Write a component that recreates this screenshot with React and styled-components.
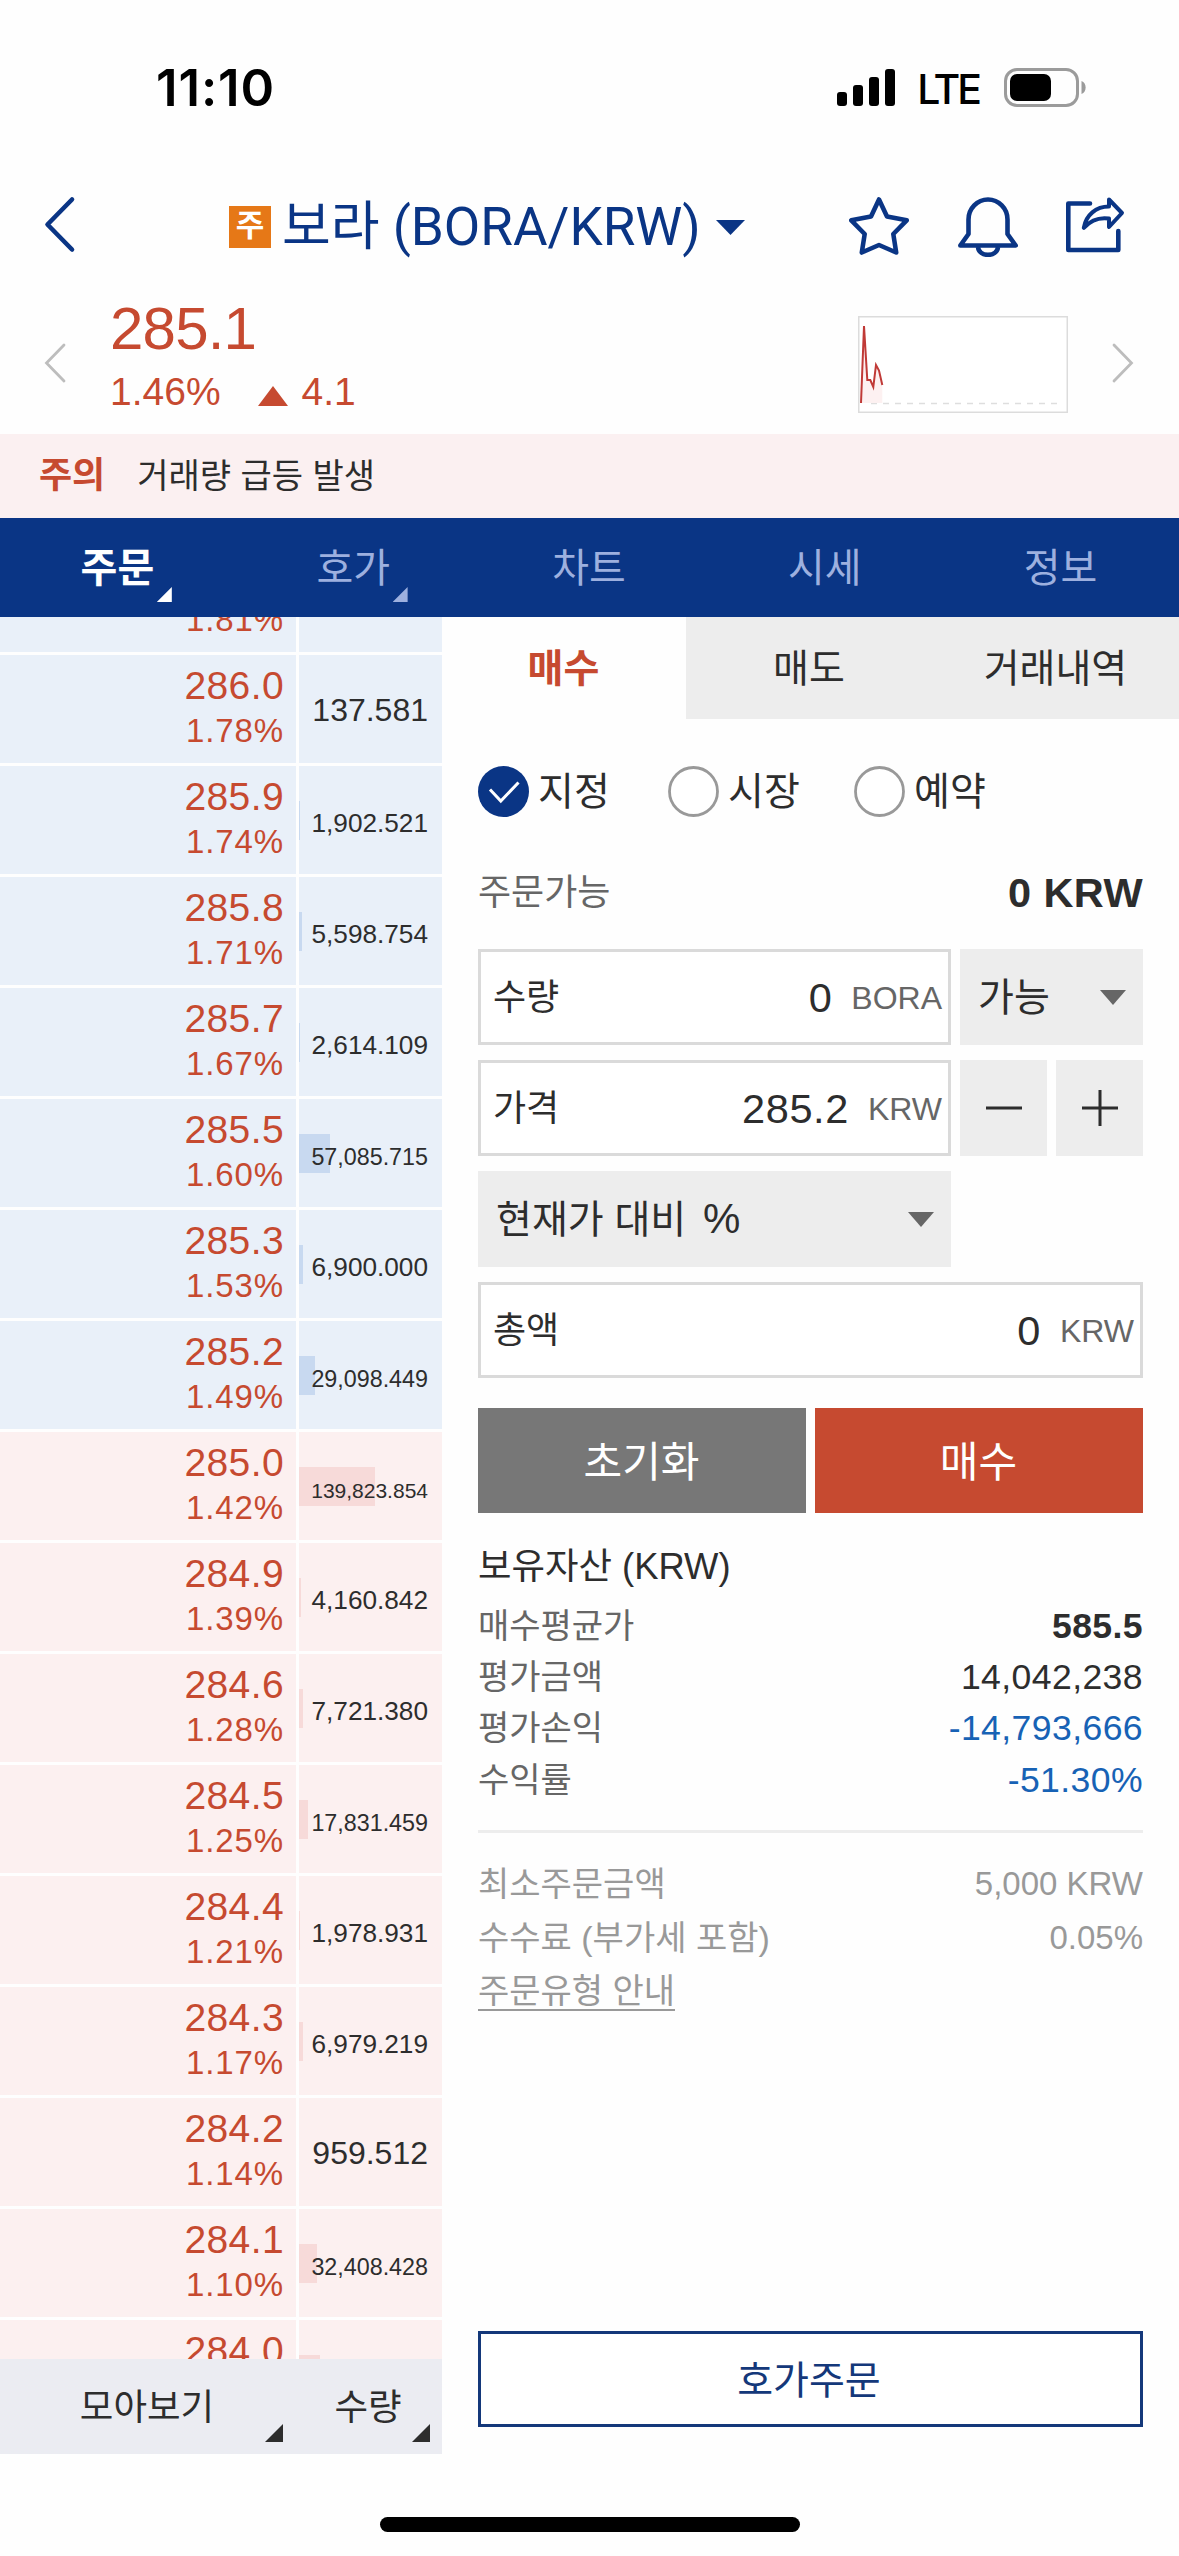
import React, { useState } from 'react'
import styled, { createGlobalStyle } from 'styled-components'

const NAVY = '#0a3585'
const RED = '#c64a30'

const GlobalStyle = createGlobalStyle`
  * {
    box-sizing: border-box;
  }

  body {
    margin: 0;
    background: #fefefe;
    color: #2d2d2d;
    font-family: "Liberation Sans", "Noto Sans CJK KR", sans-serif;
  }

  button {
    border: none;
    padding: 0;
    margin: 0;
    background: transparent;
    font-family: inherit;
    color: inherit;
  }

  svg {
    display: block;
    flex: none;
  }
`

const Screen = styled.div`
  width: 1179px;
  height: 2556px;
  overflow: hidden;
  display: flex;
  flex-direction: column;
`

const StatusBar = styled.div`
  height: 175px;
  padding: 0 93px 0 156px;
  display: flex;
  align-items: center;
  justify-content: space-between;
  color: #000;
  font-family: Inter, sans-serif;
`

const Time = styled.span`
  font-size: 51px;
  font-weight: 600;
  letter-spacing: 0.9px;
`

const StatusIcons = styled.div`
  display: flex;
  align-items: center;
`

const Network = styled.span`
  font-size: 41px;
  font-weight: 500;
  letter-spacing: -3px;
  margin: 2px 25px 0 21px;
  line-height: 44px;
`

const TopBar = styled.header`
  height: 100px;
  padding: 0 53px 0 43px;
  display: flex;
  align-items: center;
`

const CoinTitle = styled.h1`
  margin: 4px 0 0 153px;
  display: flex;
  align-items: center;
  font-family: Roboto, "Noto Sans CJK KR", sans-serif;
  font-size: 53px;
  font-weight: 400;
  line-height: 60px;
  color: ${NAVY};
  white-space: nowrap;
`

const Badge = styled.span`
  width: 42px;
  height: 42px;
  margin: 0 11px 0 0;
  background: #e67817;
  color: #fff;
  font-size: 31px;
  font-weight: 700;
  line-height: 40px;
  text-align: center;
`

const TitleText = styled.span`
  margin-right: 15px;
`

const Actions = styled.div`
  margin: 4px 0 0 auto;
  display: flex;
  gap: 48.5px;
`

const Summary = styled.section`
  height: 159px;
  padding: 17px 44px 0 43px;
  display: flex;
  align-items: center;
`

const PriceInfo = styled.div`
  margin: -6px 0 0 43px;
  color: ${RED};
`

const CurrentPrice = styled.div`
  font-size: 60px;
  line-height: 64px;
  letter-spacing: -0.8px;
`

const Change = styled.div`
  display: flex;
  align-items: center;
  font-size: 39px;
  line-height: 62px;

  svg {
    margin: 8px 14px 0 37px;
  }
`

const MiniChart = styled.svg`
  margin: 2px 43px 0 auto;
`

const Alert = styled.div`
  height: 84px;
  padding: 0 39px;
  display: flex;
  align-items: center;
  gap: 32px;
  background: #fbf0f1;
  font-size: 34px;
  line-height: 40px;

  strong {
    color: ${RED};
    font-size: 36px;
  }
`

const MainTabs = styled.nav`
  height: 99px;
  display: grid;
  grid-template-columns: repeat(5, 1fr);
  background: ${NAVY};
`

const MainTab = styled.button`
  position: relative;
  padding: 0 1px 5px 0;
  font-size: 40px;
  font-weight: ${({ $active }) => ($active ? 700 : 400)};
  color: ${({ $active }) => ($active ? '#fff' : '#9db0df')};
`

const Corner = styled.i`
  position: absolute;
  right: ${({ $right }) => $right}px;
  bottom: ${({ $bottom }) => $bottom}px;
  width: ${({ $size }) => $size}px;
  height: ${({ $size }) => $size}px;
  background: currentColor;
  clip-path: polygon(100% 0, 100% 100%, 0 100%);
`

const Content = styled.main`
  height: 1837px;
  display: flex;
`

const OrderBook = styled.aside`
  width: 442px;
  display: flex;
  flex-direction: column;
`

const BookScroll = styled.div`
  height: 1742px;
  overflow: hidden;
`

const BookRows = styled.div`
  margin-top: -73px;
  display: grid;
  row-gap: 3px;
`

const BookRow = styled.div`
  height: 108px;
  display: grid;
  grid-template-columns: 296px 143px;
  column-gap: 3px;

  > div {
    background: ${({ $side }) => ($side === 'ask' ? '#e9f0f9' : '#fcf0f0')};
  }
`

const PriceCell = styled.div`
  padding: 8px 12px 0 0;
  text-align: right;
  color: ${RED};
  font-size: 39px;
  line-height: 45px;
  letter-spacing: 0.4px;

  small {
    display: block;
    font-size: 33px;
    letter-spacing: 0.9px;
  }
`

// the empty ::before keeps every amount on the same baseline whatever its size
const AmountCell = styled.div`
  position: relative;
  display: flex;
  align-items: baseline;
  justify-content: flex-end;
  padding-right: 14px;

  &::before {
    content: '';
    height: 66px;
  }
`

const DepthBar = styled.i`
  position: absolute;
  left: 0;
  top: 35px;
  height: 39px;
  background: ${({ $side }) => ($side === 'ask' ? '#c8d9f0' : '#f7dad9')};
`

const Amount = styled.span`
  position: relative;
  font-size: ${({ $size }) => $size}px;
  line-height: 1;
`

const BookFooter = styled.div`
  height: 95px;
  display: grid;
  grid-template-columns: 296px 146px;
  background: #ebecf2;
`

const BookFilter = styled.button`
  position: relative;
  padding: 0 2px 4px 0;
  font-size: 36.5px;
`

const OrderPanel = styled.section`
  flex: 1;
  display: flex;
  flex-direction: column;
`

const OrderTabs = styled.div`
  height: 102px;
  display: grid;
  grid-template-columns: 244px 247px 246px;
`

const OrderTab = styled.button`
  display: flex;
  align-items: center;
  justify-content: center;
  position: relative;
  padding: 2px 1px 0 0;
  font-size: 39px;
  line-height: 46px;
  font-weight: ${({ $active }) => ($active ? 700 : 400)};
  color: ${({ $active }) => ($active ? RED : 'inherit')};
  background: ${({ $active }) => ($active ? 'transparent' : '#ededed')};

  & + & + &::before {
    content: '';
    position: absolute;
    left: 0;
    top: 35px;
    width: 2px;
    height: 33px;
    background: #dcdcdc;
  }
`

const OrderForm = styled.div`
  flex: 1;
  display: flex;
  flex-direction: column;
  padding: 47px 36px 27px;
`

const Radios = styled.div`
  display: flex;
  height: 51px;
`

const Radio = styled.button`
  width: ${({ $width }) => $width}px;
  display: flex;
  align-items: center;
  gap: 9px;
  font-size: 39px;
  line-height: 46px;
`

const Available = styled.div`
  display: flex;
  align-items: center;
  justify-content: space-between;
  height: 46px;
  margin: 53px 0 33px;
  font-size: 36px;
  line-height: 42px;
  color: #666;

  strong {
    font-size: 41.5px;
    letter-spacing: 0.4px;
    color: #2d2d2d;
  }
`

const Fields = styled.div`
  display: grid;
  grid-template-columns: 473px 87px 87px;
  grid-auto-rows: 96px;
  gap: 15px 9px;
`

const Field = styled.label`
  grid-column: ${({ $wide }) => ($wide ? '1 / -1' : 'auto')};
  display: flex;
  align-items: center;
  padding: 1px 6px 0 12px;
  border: 3px solid #dadada;
  background: #fff;
  font-size: 36px;
  line-height: 46px;
`

const FieldValue = styled.span`
  margin-left: auto;
  font-size: 41.5px;
  letter-spacing: 0.6px;
`

const FieldUnit = styled.span`
  margin-left: 19px;
  font-size: 32px;
  color: #666;
`

const Select = styled.button`
  grid-column: ${({ $span }) => `span ${$span}`};
  display: flex;
  align-items: center;
  justify-content: space-between;
  padding: 1px 17px 0 18px;
  background: #ededed;
  font-size: 39px;
  line-height: 46px;
`

const Percent = styled.span`
  margin-left: 6px;
  font-size: 42px;
`

const Step = styled.button`
  display: flex;
  align-items: center;
  justify-content: center;
  background: #ededed;
`

const Filler = styled.span`
  grid-column: span 2;
`

const Buttons = styled.div`
  display: grid;
  grid-template-columns: 1fr 1fr;
  gap: 9px;
  margin-top: 30px;
`

const Button = styled.button`
  height: 105px;
  padding: 0 1px 4px 0;
  font-size: 42px;
  color: #fff;
  background: ${({ $primary }) => ($primary ? RED : '#777')};
`

const Assets = styled.section`
  margin-top: 28px;
  padding-bottom: 24px;
  border-bottom: 3px solid #ededed;
`

const AssetsTitle = styled.h2`
  margin: 0 0 8px;
  font-size: 36.4px;
  font-weight: 400;
  line-height: 51px;
`

const AssetRow = styled.div`
  display: flex;
  align-items: center;
  justify-content: space-between;
  height: 51.4px;
  font-size: 34px;
  line-height: 40px;
  color: #666;
`

const AssetValue = styled.span`
  font-size: 35.6px;
  letter-spacing: 0.4px;
  font-weight: ${({ $bold }) => ($bold ? 700 : 400)};
  color: ${({ $loss }) => ($loss ? '#1762b5' : '#2d2d2d')};
`

const Notes = styled.section`
  margin-top: 24px;
`

const NoteRow = styled.div`
  display: flex;
  align-items: center;
  justify-content: space-between;
  height: 54.4px;
  font-size: 34px;
  line-height: 40px;
  color: #999;

  span + span {
    font-size: 33px;
  }
`

const NoteLink = styled.a`
  line-height: 35px;
  border-bottom: 2px solid #999;
`

const BookOrderButton = styled.button`
  height: 96px;
  margin-top: auto;
  padding: 0 3px 4px 0;
  border: 3px solid #14387a;
  background: #fff;
  color: #14387a;
  font-size: 39px;
`

const HomeIndicator = styled.div`
  width: 420px;
  height: 15px;
  margin: 63px auto 0;
  border-radius: 8px;
  background: #000;
`

const Signal = () => (
  <svg width="59" height="38" viewBox="0 0 59 38">
    <rect x="0" y="23" width="10" height="14" rx="3" />
    <rect x="16" y="16" width="10" height="21" rx="3" />
    <rect x="32" y="8" width="10" height="29" rx="3" />
    <rect x="48" y="0" width="10" height="37" rx="3" />
  </svg>
)

const Battery = () => (
  <svg width="82" height="39" viewBox="0 0 82 39">
    <rect x="1.5" y="1.5" width="72" height="36" rx="11.5" fill="none" stroke="#9b9b9b" strokeWidth="3" />
    <rect x="6" y="6" width="41" height="27" rx="7" />
    <path d="M77.5 13c5.5 2 5.5 11 0 13z" fill="#9b9b9b" />
  </svg>
)

const BackIcon = () => (
  <svg width="33" height="60" viewBox="0 0 33 60" fill="none" stroke={NAVY} strokeWidth="4.6" strokeLinecap="round" strokeLinejoin="round">
    <path d="M29 4.5 4.5 29.5 29 54.5" />
  </svg>
)

const StarIcon = () => (
  <svg width="60" height="60" viewBox="0 0 60 60" fill="none" stroke={NAVY} strokeWidth="4.6" strokeLinejoin="round">
    <path d="M30 2.5 38 19.5 57.7 23.3 44.3 37 47.2 55.5 30 48 12.8 55.5 15.7 37 2.3 23.3 22 19.500z" />
  </svg>
)

const BellIcon = () => (
  <svg width="60" height="60" viewBox="0 0 60 60" fill="none" stroke={NAVY} strokeWidth="4.6" strokeLinejoin="round">
    <path d="M10.500 37V22.500a19.500 20 0 0 1 39 0V37l8.200 11.500H2.300z" />
    <path d="M20 50c1 10.500 19 10.500 20 0" />
  </svg>
)

const ShareIcon = () => (
  <svg width="60" height="60" viewBox="0 0 60 60" fill="none" stroke={NAVY} strokeWidth="4.6" strokeLinecap="round" strokeLinejoin="round">
    <path d="M24 6.500H2.300v46.500h50V34" />
    <path d="M43 2.500 56 16 43 30v-8.500C33 20 24 24 17.800 30.800 20 18 30 9.500 43 9.500z" strokeWidth="4" />
  </svg>
)

const Arrow = ({ flip }) => (
  <svg width="24" height="42" viewBox="0 0 24 42" fill="none" stroke="#bdbdbd" strokeWidth="2.8" strokeLinecap="round">
    <path d={flip ? 'M3 3 20.5 21 3 39' : 'M21 3 3.5 21 21 39'} />
  </svg>
)

const Triangle = ({ width, height, color, up }) => (
  <svg width={width} height={height} viewBox="0 0 10 10" preserveAspectRatio="none" fill={color}>
    <path d={up ? 'M0 10h10L5 0z' : 'M0 0h10L5 10z'} />
  </svg>
)

const RadioMark = ({ checked }) => (
  <svg width="51" height="51" viewBox="0 0 51 51" fill="none">
    {checked ? (
      <>
        <circle cx="25.5" cy="25.5" r="25.5" fill={NAVY} />
        <path d="M12 23.5 22.8 35 40.5 16.5" stroke="#fff" strokeWidth="3" />
      </>
    ) : (
      <circle cx="25.5" cy="25.5" r="24" fill="#fff" stroke="#999" strokeWidth="2.8" />
    )}
  </svg>
)

const Sparkline = () => (
  <MiniChart width="210" height="97" viewBox="0 0 210 97" fill="none">
    <rect x="0.75" y="0.75" width="208.5" height="95.5" stroke="#dcdcdc" strokeWidth="1.5" fill="#fff" />
    <path d="M13 87.5h190" stroke="#dedede" strokeWidth="1.5" strokeDasharray="6 6" />
    <path d="M3 87 6 10 9.3 64h3l3 7L18 49l3 5.5L24.3 69V87z" fill="#fdf1f1" />
    <path d="M3 87 6 10 9.3 64h3l3 7L18 49l3 5.5L24.3 69" stroke="#c03a37" strokeWidth="2" />
  </MiniChart>
)

// the first and last rows are only partly scrolled into view
const rows = [
  ['\u00a0', '1.81%', '', 'ask', 0],
  ['286.0', '1.78%', '137.581', 'ask', 0],
  ['285.9', '1.74%', '1,902.521', 'ask', 1],
  ['285.8', '1.71%', '5,598.754', 'ask', 3],
  ['285.7', '1.67%', '2,614.109', 'ask', 1],
  ['285.5', '1.60%', '57,085.715', 'ask', 31],
  ['285.3', '1.53%', '6,900.000', 'ask', 4],
  ['285.2', '1.49%', '29,098.449', 'ask', 16],
  ['285.0', '1.42%', '139,823.854', 'bid', 76],
  ['284.9', '1.39%', '4,160.842', 'bid', 2],
  ['284.6', '1.28%', '7,721.380', 'bid', 4],
  ['284.5', '1.25%', '17,831.459', 'bid', 9],
  ['284.4', '1.21%', '1,978.931', 'bid', 1],
  ['284.3', '1.17%', '6,979.219', 'bid', 4],
  ['284.2', '1.14%', '959.512', 'bid', 0],
  ['284.1', '1.10%', '32,408.428', 'bid', 18],
  ['284.0', '', '', 'bid', 21],
]

// shrinks long amounts so that they fit the cell
const amountSize = (text) => {
  const sizes = { 9: 26.2, 10: 23.3, 11: 21 }
  return sizes[text.length] || 32
}

const App = () => {
  const [tab, setTab] = useState('주문')
  const [orderTab, setOrderTab] = useState('매수')
  const [type, setType] = useState('지정')

  return (
    <Screen>
      <GlobalStyle />
      <StatusBar>
        <Time>11:10</Time>
        <StatusIcons>
          <Signal />
          <Network>LTE</Network>
          <Battery />
        </StatusIcons>
      </StatusBar>

      <TopBar>
        <BackIcon />
        <CoinTitle>
          <Badge>주</Badge>
          <TitleText>보라 (BORA/KRW)</TitleText>
          <Triangle width={29} height={15} color={NAVY} />
        </CoinTitle>
        <Actions>
          <StarIcon />
          <BellIcon />
          <ShareIcon />
        </Actions>
      </TopBar>

      <Summary>
        <Arrow />
        <PriceInfo>
          <CurrentPrice>285.1</CurrentPrice>
          <Change>
            1.46%
            <Triangle width={30} height={20} color={RED} up />
            4.1
          </Change>
        </PriceInfo>
        <Sparkline />
        <Arrow flip />
      </Summary>

      <Alert>
        <strong>주의</strong>
        <span>거래량 급등 발생</span>
      </Alert>

      <MainTabs>
        {['주문', '호가', '차트', '시세', '정보'].map((name, i) => (
          <MainTab key={name} $active={tab === name} onClick={() => setTab(name)}>
            {name}
            {i < 2 && <Corner $right={64} $bottom={15} $size={15} />}
          </MainTab>
        ))}
      </MainTabs>

      <Content>
        <OrderBook>
          <BookScroll>
            <BookRows>
              {rows.map(([price, rate, amount, side, depth]) => (
                <BookRow key={price} $side={side}>
                  <PriceCell>
                    {price}
                    <small>{rate}</small>
                  </PriceCell>
                  <AmountCell>
                    <DepthBar $side={side} style={{ width: depth }} />
                    <Amount $size={amountSize(amount)}>{amount}</Amount>
                  </AmountCell>
                </BookRow>
              ))}
            </BookRows>
          </BookScroll>
          <BookFooter>
            <BookFilter>
              모아보기
              <Corner $right={13} $bottom={12} $size={18} />
            </BookFilter>
            <BookFilter>
              수량
              <Corner $right={12} $bottom={12} $size={18} />
            </BookFilter>
          </BookFooter>
        </OrderBook>

        <OrderPanel>
          <OrderTabs>
            {['매수', '매도', '거래내역'].map((name) => (
              <OrderTab key={name} $active={orderTab === name} onClick={() => setOrderTab(name)}>
                {name}
              </OrderTab>
            ))}
          </OrderTabs>

          <OrderForm>
            <Radios>
              {[['지정', 190], ['시장', 186], ['예약', 186]].map(([name, width]) => (
                <Radio key={name} $width={width} onClick={() => setType(name)}>
                  <RadioMark checked={type === name} />
                  {name}
                </Radio>
              ))}
            </Radios>

            <Available>
              주문가능
              <strong>0 KRW</strong>
            </Available>

            <Fields>
              <Field>
                수량
                <FieldValue>0</FieldValue>
                <FieldUnit>BORA</FieldUnit>
              </Field>
              <Select $span={2}>
                가능
                <Triangle width={26} height={15} color="#666" />
              </Select>
              <Field>
                가격
                <FieldValue>285.2</FieldValue>
                <FieldUnit>KRW</FieldUnit>
              </Field>
              <Step>
                <svg width="36" height="36" stroke="#2d2d2d" strokeWidth="3">
                  <path d="M0 18h36" />
                </svg>
              </Step>
              <Step>
                <svg width="36" height="36" stroke="#2d2d2d" strokeWidth="3">
                  <path d="M0 18h36M18 0v36" />
                </svg>
              </Step>
              <Select $span={1}>
                <span>
                  현재가 대비 <Percent>%</Percent>
                </span>
                <Triangle width={26} height={15} color="#666" />
              </Select>
              <Filler />
              <Field $wide>
                총액
                <FieldValue>0</FieldValue>
                <FieldUnit>KRW</FieldUnit>
              </Field>
            </Fields>

            <Buttons>
              <Button>초기화</Button>
              <Button $primary>매수</Button>
            </Buttons>

            <Assets>
              <AssetsTitle>보유자산 (KRW)</AssetsTitle>
              <AssetRow>
                매수평균가
                <AssetValue $bold>585.5</AssetValue>
              </AssetRow>
              <AssetRow>
                평가금액
                <AssetValue>14,042,238</AssetValue>
              </AssetRow>
              <AssetRow>
                평가손익
                <AssetValue $loss>-14,793,666</AssetValue>
              </AssetRow>
              <AssetRow>
                수익률
                <AssetValue $loss>-51.30%</AssetValue>
              </AssetRow>
            </Assets>

            <Notes>
              <NoteRow>
                <span>최소주문금액</span>
                <span>5,000 KRW</span>
              </NoteRow>
              <NoteRow>
                <span>수수료 (부가세 포함)</span>
                <span>0.05%</span>
              </NoteRow>
              <NoteRow>
                <NoteLink>주문유형 안내</NoteLink>
              </NoteRow>
            </Notes>

            <BookOrderButton>호가주문</BookOrderButton>
          </OrderForm>
        </OrderPanel>
      </Content>

      <HomeIndicator />
    </Screen>
  )
}

export default App
